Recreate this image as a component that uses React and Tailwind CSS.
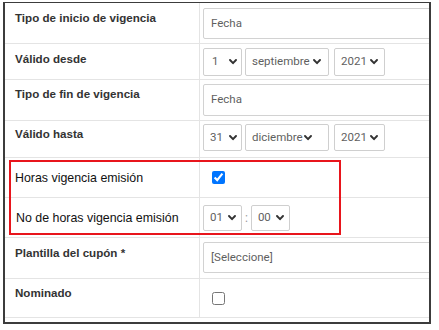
import React from 'react';

const Chevron = () => (
  <svg width="8" height="6" viewBox="0 0 8 6" className="shrink-0">
    <polyline points="1,1 4,4.2 7,1" fill="none" stroke="#333" strokeWidth="1.9" strokeLinecap="round" strokeLinejoin="round" />
  </svg>
);

const Select = ({ value, w, h, pr, gap }) => (
  <div className={`flex items-center justify-between rounded-[2px] border border-[#cfcfcf] bg-white pl-[6px] font-['Roboto',sans-serif] text-[11.5px] text-[#5f5f5f] ${w} ${h} ${pr}`}>
    <span className={gap}>{value}</span>
    <Chevron />
  </div>
);

const TextBox = ({ value, h }) => (
  <div className={`flex w-[260px] items-center rounded-[2px] border border-[#d2d2d2] bg-white pl-[7px] font-['Roboto',sans-serif] text-[11.5px] text-[#5f5f5f] ${h}`}>
    {value}
  </div>
);

const Row = ({ h, label, labelCls, rightCls, children }) => (
  <div className={`flex border-b border-[#e4e4e4] ${h}`}>
    <div className={`w-[195px] shrink-0 border-r border-[#e4e4e4] pl-[10px] font-['Liberation_Sans',Arial,sans-serif] leading-[16px] ${labelCls}`}>
      {label}
    </div>
    <div className={`flex flex-1 pl-[3px] ${rightCls}`}>{children}</div>
  </div>
);

const bold = "font-bold text-[11.6px] text-[#333]";

export default function App() {
  return (
    <div className="relative h-[330px] w-[439px] overflow-hidden bg-white">
      <div className="ml-[3px] mt-[2px] h-[322px] w-[428px] overflow-hidden border-t border-l-2 border-r-2 border-b-2 border-[#3c3c3c]">
        <Row h="h-[41px]" label="Tipo de inicio de vigencia" labelCls={`${bold} pt-[7px]`} rightCls="pt-[5px]">
          <TextBox value="Fecha" h="h-[31px]" />
        </Row>
        <Row h="h-[36px]" label="Válido desde" labelCls={`${bold} pt-[7px]`} rightCls="pt-[4px] gap-[3px]">
          <Select value="1" w="w-[39px]" h="h-[28px]" pr="pr-[4px]" gap="pl-[2px]" />
          <Select value="septiembre" w="w-[84px]" h="h-[28px]" pr="pr-[7px]" />
          <Select value="2021" w="w-[51px]" h="h-[28px]" pr="pr-[6px] ml-[2px]" />
        </Row>
        <Row h="h-[41px]" label="Tipo de fin de vigencia" labelCls={`${bold} pt-[6px]`} rightCls="pt-[4px]">
          <TextBox value="Fecha" h="h-[32px]" />
        </Row>
        <Row h="h-[37px]" label="Válido hasta" labelCls={`${bold} pt-[5px]`} rightCls="pt-[3px] gap-[3px]">
          <Select value="31" w="w-[39px]" h="h-[27px]" pr="pr-[4px]" />
          <Select value="diciembre" w="w-[84px]" h="h-[27px]" pr="pr-[16px]" />
          <Select value="2021" w="w-[51px]" h="h-[27px]" pr="pr-[6px] ml-[2px]" />
        </Row>
        <Row h="h-[40px]" label="Horas vigencia emisión" labelCls="flex items-center text-[12.4px] text-[#111] pl-[9px]" rightCls="items-center pl-[12px]">
          <input type="checkbox" defaultChecked className="m-0 h-[13px] w-[13px]" />
        </Row>
        <Row h="h-[40px]" label="No de horas vigencia emisión" labelCls="flex items-center text-[12.4px] text-[#111] pl-[11px]" rightCls="items-center">
          <Select value="01" w="w-[39px]" h="h-[26px]" pr="pr-[5px]" />
          <span className="mx-[3px] font-['Roboto',sans-serif] text-[12px] text-[#999]">:</span>
          <Select value="00" w="w-[39px]" h="h-[26px]" pr="pr-[5px]" />
        </Row>
        <Row h="h-[41px]" label="Plantilla del cupón *" labelCls={`${bold} pt-[7px]`} rightCls="pt-[4px]">
          <TextBox value="[Seleccione]" h="h-[31px]" />
        </Row>
        <Row h="h-[39px]" label="Nominado" labelCls={`${bold} pt-[6px]`} rightCls="pt-[13px] pl-[12px]">
          <input type="checkbox" className="m-0 h-[13px] w-[13px]" />
        </Row>
      </div>
      <div className="pointer-events-none absolute left-[9px] top-[160px] h-[75px] w-[332px] border-2 border-[#e8151c]" />
    </div>
  );
}
